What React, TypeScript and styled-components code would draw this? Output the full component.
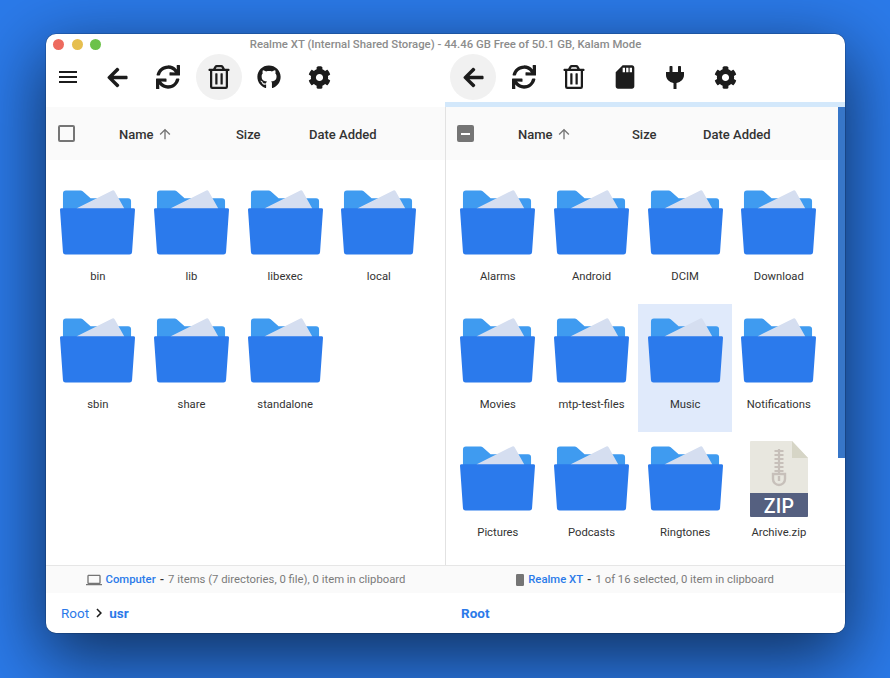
import React from 'react';
import styled, { createGlobalStyle } from 'styled-components';
import { FaArrowLeft, FaCog, FaGithub, FaRegTrashAlt, FaSync } from 'react-icons/fa';
import { MdArrowUpward, MdChevronRight, MdMenu, MdOutlineLaptop, MdSdCard } from 'react-icons/md';

const GlobalStyle = createGlobalStyle`
  html, body {
    margin: 0;
    height: 100%;
    overflow: hidden;
    background: #2b7ae9;
    font-family: Roboto, "Liberation Sans", sans-serif;
  }
`;

const Page = styled.div`
  width: 890px;
  height: 678px;
  padding: 34px 0 0 46px;
  box-sizing: border-box;
`;

const Window = styled.div`
  width: 799px;
  height: 599px;
  display: flex;
  flex-direction: column;
  background: #fff;
  border-radius: 10px;
  overflow: hidden;
  box-shadow: 0 0 0 0.5px rgba(0, 0, 0, 0.3), 0 22px 70px 4px rgba(0, 0, 0, 0.6);
`;

const TitleBar = styled.div`
  height: 20px;
  flex: none;
  display: grid;
  grid-template-columns: 1fr auto 1fr;
  align-items: center;
`;

const Lights = styled.div`
  display: flex;
  gap: 7.5px;
  padding-left: 7px;
`;

const Light = styled.span<{ $color: string }>`
  width: 11px;
  height: 11px;
  border-radius: 50%;
  background: ${p => p.$color};
`;

const Title = styled.div`
  font-size: 11.35px;
  font-weight: 500;
  color: #8c8c8c;
`;

const Panes = styled.div`
  flex: 1;
  display: grid;
  grid-template-columns: 399px 400px;
  min-height: 0;
`;

const Pane = styled.div`
  display: flex;
  flex-direction: column;
  min-width: 0;
`;

const Toolbar = styled.div<{ $inset: number }>`
  height: 48px;
  flex: none;
  display: flex;
  align-items: flex-start;
  gap: 4.5px;
  padding-left: ${p => p.$inset}px;
`;

const ToolButton = styled.button<{ $active?: boolean; $narrow?: boolean }>`
  width: ${p => (p.$narrow ? 44 : 46)}px;
  height: 46px;
  padding: 0;
  border: 0;
  border-radius: 50%;
  display: flex;
  align-items: center;
  justify-content: center;
  color: #1c1c1c;
  background: ${p => (p.$active ? '#f1f1f1' : 'transparent')};
`;

const FocusBar = styled.div<{ $focused?: boolean }>`
  height: 5px;
  flex: none;
  background: ${p => (p.$focused ? '#d3e8fb' : 'transparent')};
`;

const ScrollArea = styled.div<{ $divider?: boolean }>`
  height: 458px;
  flex: none;
  display: flex;
  box-sizing: border-box;
  border-left: ${p => (p.$divider ? '1px solid #e2e2e2' : '0')};
`;

const Content = styled.div`
  flex: 1;
  min-width: 0;
`;

const ScrollTrack = styled.div`
  width: 7px;
  flex: none;
`;

const ScrollThumb = styled.div`
  height: 351px;
  background: #3776c8;
`;

const Header = styled.div<{ $inset: number }>`
  height: 53px;
  display: flex;
  align-items: center;
  padding-left: ${p => p.$inset}px;
  background: #fafafa;
`;

const Checkbox = styled.span<{ $mixed?: boolean }>`
  width: 17px;
  height: 17px;
  box-sizing: border-box;
  flex: none;
  display: flex;
  align-items: center;
  justify-content: center;
  border: 2px solid #757575;
  border-radius: 2px;
  background: ${p => (p.$mixed ? '#757575' : 'transparent')};
`;

const MixedMark = styled.span`
  width: 9px;
  height: 2px;
  background: #fff;
`;

const Column = styled.div<{ $gap: number; $width?: number }>`
  margin-left: ${p => p.$gap}px;
  width: ${p => (p.$width ? `${p.$width}px` : 'auto')};
  flex: none;
  display: flex;
  align-items: center;
  gap: 3px;
  padding-top: 1px;
  font-size: 13px;
  font-weight: 500;
  color: #333;
`;

const SortArrow = styled(MdArrowUpward)`
  color: #757575;
`;

const Grid = styled.div`
  display: grid;
  grid-template-columns: repeat(4, 93.67px);
  grid-auto-rows: 128px;
  padding: 16px 0 0 5px;
`;

const Cell = styled.div<{ $selected?: boolean }>`
  display: flex;
  flex-direction: column;
  align-items: center;
  padding-top: 13px;
  box-sizing: border-box;
  background: ${p => (p.$selected ? '#e0eafb' : 'transparent')};
`;

const IconBox = styled.div`
  height: 67px;
  display: flex;
  align-items: flex-start;
`;

const FileIconBox = styled(IconBox)`
  margin-top: -4px;
  height: 71px;
`;

const Label = styled.div`
  margin-top: 13px;
  font-size: 11.25px;
  line-height: 16px;
  color: #333;
`;

const StatusBar = styled.div`
  height: 28px;
  flex: none;
  box-sizing: border-box;
  border-top: 1px solid #e6e6e6;
  background: #fafafa;
  display: flex;
  align-items: center;
  justify-content: center;
  gap: 4px;
  font-size: 11.3px;
  color: #7a7a7a;
`;

const StatusIcon = styled.span`
  display: flex;
  color: #757575;
`;

const DeviceName = styled.span`
  color: #2b7ae9;
  font-weight: 500;
`;

const Dash = styled.span`
  color: #333;
  font-weight: 700;
`;

const Breadcrumb = styled.div<{ $inset: number }>`
  flex: 1;
  display: flex;
  align-items: center;
  padding: 0 0 1px ${p => p.$inset}px;
  font-size: 13.5px;
  color: #2b7ae9;
`;

const Crumb = styled.span<{ $current?: boolean }>`
  font-weight: ${p => (p.$current ? 700 : 400)};
`;

const CrumbArrow = styled(MdChevronRight)`
  color: #1c1c1c;
  margin: 0 1px;
`;

const FolderIcon = () => (
  <svg width="75" height="67" viewBox="0 0 76 67">
    <path d="M3 4a3 3 0 0 1 3-3h15a3 3 0 0 1 2 .8L31 9h38a3 3 0 0 1 3 3v10H3z" fill="#3f9bf0" />
    <path d="M17 19L52.5 1.2a2.2 2.2 0 0 1 3 .9L65 19v3H17z" fill="#d5def0" />
    <path d="M1.500 19h73a1.500 1.500 0 0 1 1.500 1.600l-3 43a2.600 2.600 0 0 1-2.600 2.400H5.600A2.600 2.600 0 0 1 3 63.600L0 20.600A1.500 1.500 0 0 1 1.500 19z" fill="#2b7aec" />
  </svg>
);

const PlugIcon = () => (
  <svg width="18" height="23" viewBox="0 0 18 23" fill="currentColor">
    <rect x="3.500" width="3" height="6.500" rx="0.800" />
    <rect x="12" width="3" height="6.500" rx="0.800" />
    <path d="M0 6h18v3c0 4-3 7-7.500 8v6h-3v-6C3 16 0 13 0 9z" />
  </svg>
);

const PhoneIcon = () => (
  <svg width="8" height="12" viewBox="0 0 8 12">
    <rect width="8" height="12" rx="1.2" fill="#757575" />
  </svg>
);

const ZipIcon = () => (
  <svg width="58" height="76" viewBox="0 0 58 76">
    <path d="M1 0h41l16 17v58a1 1 0 0 1-1 1H1a1 1 0 0 1-1-1V1a1 1 0 0 1 1-1z" fill="#e8e7df" />
    <path d="M42 0l16 17H42z" fill="#d6d5c6" />
    <path d="M0 52h58v23a1 1 0 0 1-1 1H1a1 1 0 0 1-1-1z" fill="#556080" />
    <path d="M29 8v24M24.500 10h9M24.500 14h9M24.500 18h9M24.500 22h9M24.500 26h9M24.500 30h9" stroke="#c7c0ba" strokeWidth="2.200" fill="none" />
    <path d="M23 33h12v5a6 6 0 0 1-12 0z" stroke="#c7c0ba" strokeWidth="2.400" fill="none" />
    <path d="M29 35v5" stroke="#c7c0ba" strokeWidth="2.400" />
    <text x="29" y="71.500" textAnchor="middle" fontFamily="Roboto, sans-serif" fontSize="19.500" fontWeight="500" letterSpacing="0.300" fill="#fff">ZIP</text>
  </svg>
);

const leftItems = ['bin', 'lib', 'libexec', 'local', 'sbin', 'share', 'standalone'];
const rightItems = [
  'Alarms', 'Android', 'DCIM', 'Download',
  'Movies', 'mtp-test-files', 'Music', 'Notifications',
  'Pictures', 'Podcasts', 'Ringtones',
];

const App: React.FC = () => (
  <Page>
    <GlobalStyle />
    <Window>
      <TitleBar>
        <Lights>
          <Light $color="#ed6a5e" />
          <Light $color="#e6bf4f" />
          <Light $color="#6cc24a" />
        </Lights>
        <Title>Realme XT (Internal Shared Storage) - 44.46 GB Free of 50.1 GB, Kalam Mode</Title>
      </TitleBar>
      <Panes>
        <Pane>
          <Toolbar $inset={0}>
            <ToolButton $narrow><MdMenu size={24} /></ToolButton>
            <ToolButton><FaArrowLeft size={23} /></ToolButton>
            <ToolButton><FaSync size={24} /></ToolButton>
            <ToolButton $active><FaRegTrashAlt size={24} /></ToolButton>
            <ToolButton><FaGithub size={24} /></ToolButton>
            <ToolButton><FaCog size={23} /></ToolButton>
          </Toolbar>
          <FocusBar />
          <ScrollArea>
            <Content>
              <Header $inset={12}>
                <Checkbox />
                <Column $gap={44} $width={117}>Name <SortArrow size={16} /></Column>
                <Column $gap={0} $width={73}>Size</Column>
                <Column $gap={0}>Date Added</Column>
              </Header>
              <Grid>
                {leftItems.map(name => (
                  <Cell key={name}>
                    <IconBox><FolderIcon /></IconBox>
                    <Label>{name}</Label>
                  </Cell>
                ))}
              </Grid>
            </Content>
          </ScrollArea>
          <StatusBar>
            <StatusIcon><MdOutlineLaptop size={16} /></StatusIcon>
            <DeviceName>Computer</DeviceName>
            <Dash>-</Dash>
            <span>7 items (7 directories, 0 file), 0 item in clipboard</span>
          </StatusBar>
          <Breadcrumb $inset={15}>
            <Crumb>Root</Crumb>
            <CrumbArrow size={18} />
            <Crumb $current>usr</Crumb>
          </Breadcrumb>
        </Pane>
        <Pane>
          <Toolbar $inset={5}>
            <ToolButton $active><FaArrowLeft size={23} /></ToolButton>
            <ToolButton><FaSync size={24} /></ToolButton>
            <ToolButton><FaRegTrashAlt size={24} /></ToolButton>
            <ToolButton><MdSdCard size={28} /></ToolButton>
            <ToolButton><PlugIcon /></ToolButton>
            <ToolButton><FaCog size={23} /></ToolButton>
          </Toolbar>
          <FocusBar $focused />
          <ScrollArea $divider>
            <Content>
              <Header $inset={11}>
                <Checkbox $mixed><MixedMark /></Checkbox>
                <Column $gap={44} $width={114}>Name <SortArrow size={16} /></Column>
                <Column $gap={0} $width={71}>Size</Column>
                <Column $gap={0}>Date Added</Column>
              </Header>
              <Grid>
                {rightItems.map(name => (
                  <Cell key={name} $selected={name === 'Music'}>
                    <IconBox><FolderIcon /></IconBox>
                    <Label>{name}</Label>
                  </Cell>
                ))}
                <Cell>
                  <FileIconBox><ZipIcon /></FileIconBox>
                  <Label>Archive.zip</Label>
                </Cell>
              </Grid>
            </Content>
            <ScrollTrack><ScrollThumb /></ScrollTrack>
          </ScrollArea>
          <StatusBar>
            <StatusIcon><PhoneIcon /></StatusIcon>
            <DeviceName>Realme XT</DeviceName>
            <Dash>-</Dash>
            <span>1 of 16 selected, 0 item in clipboard</span>
          </StatusBar>
          <Breadcrumb $inset={16}>
            <Crumb $current>Root</Crumb>
          </Breadcrumb>
        </Pane>
      </Panes>
    </Window>
  </Page>
);

export default App;
